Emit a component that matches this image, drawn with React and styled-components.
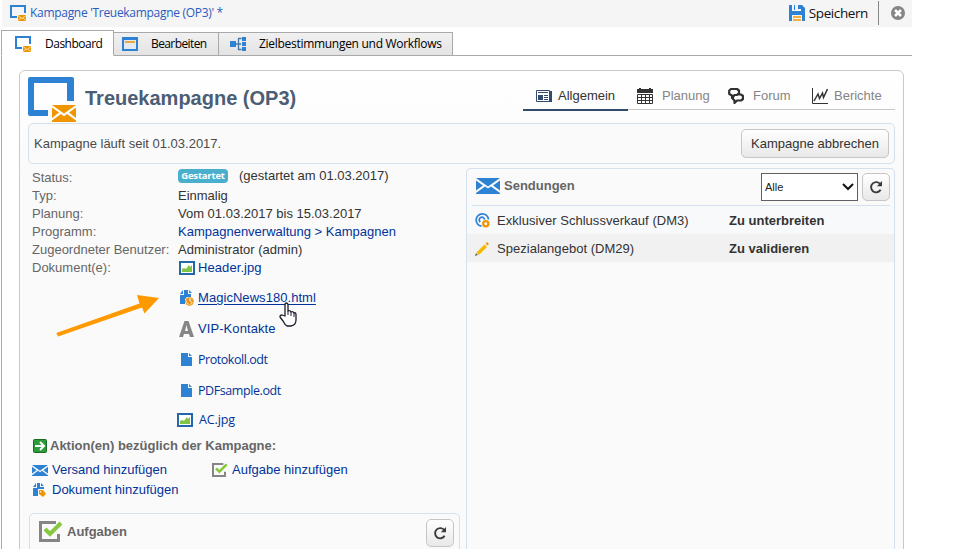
import React from "react";
import styled, { createGlobalStyle } from "styled-components";

const Global = createGlobalStyle`
  * { box-sizing: border-box; }
  body { margin: 0; background: #fff; font-family: "Liberation Sans", Arial, sans-serif; }
`;

const Page = styled.div`
  width: 953px;
  height: 549px;
  overflow: hidden;
  background: #fff;
`;
const Window = styled.div`
  width: 912px;
  height: 549px;
  display: flex;
  flex-direction: column;
`;
const Text = styled.span`
  font-family: ${(p) => (p.$ui ? '"Open Sans", "Noto Sans", sans-serif' : '"Liberation Sans", Arial, sans-serif')};
  font-size: ${(p) => p.$size || 13}px;
  font-weight: ${(p) => (p.$bold ? 700 : 400)};
  letter-spacing: ${(p) => p.$track || 0}px;
  color: ${(p) => p.$color || "#333"};
  line-height: 18px;
  white-space: pre;
`;
const Link = styled(Text).attrs({ as: "a" })`
  color: #003399;
  text-decoration: ${(p) => (p.$hover ? "underline" : "none")};
  text-underline-offset: 2px;
`;
const Icon = styled.svg`
  display: block;
  flex: none;
  width: ${(p) => p.$w || 16}px;
  height: ${(p) => p.$h || p.$w || 16}px;
`;

const TitleBar = styled.header`
  display: flex;
  flex: none;
  align-items: center;
  height: 27px;
  margin-left: 2px;
  padding: 0 7px 1px 8px;
  background: #f5f5f5;
`;
const TitleText = styled.div`
  flex: 1;
  display: flex;
  margin-left: 4px;
`;
const SaveButton = styled.div`
  display: flex;
  align-items: center;
  gap: 4px;
`;
const BarDivider = styled.i`
  width: 1px;
  height: 24px;
  margin: 0 12px 0 10px;
  background: #858585;
`;

const Tabs = styled.nav`
  display: flex;
  flex: none;
  align-items: flex-end;
  height: 26px;
  margin: 3px 0 0 1px;
`;
const Tab = styled.div`
  display: flex;
  align-items: center;
  width: ${(p) => p.$w}px;
  height: ${(p) => (p.$active ? 26 : 24)}px;
  padding-top: ${(p) => (p.$active ? 2 : 0)}px;
  padding-left: ${(p) => p.$pad}px;
  gap: ${(p) => p.$gap}px;
  border: 1px solid #a9a9a9;
  border-left-width: ${(p) => (p.$first === false ? 0 : 1)}px;
  border-bottom-color: ${(p) => (p.$active ? "#fff" : "#a9a9a9")};
  background: ${(p) => (p.$active ? "#fff" : "linear-gradient(#f1f1f1, #e3e3e3)")};
`;
const TabLine = styled.div`
  flex: 1;
  border-bottom: 1px solid #a9a9a9;
`;
const Workspace = styled.main`
  flex: 1;
  min-height: 0;
  margin-left: 1px;
  padding: 14px 8px 0 17px;
  border-left: 1px solid #a9a9a9;
`;
const Panel = styled.section`
  height: 500px;
  padding: 6px 8px 0;
  border: 1px solid #c9c9c9;
  border-radius: 6px;
  background: linear-gradient(#fff, #fafafa 100px);
`;
const PanelHeader = styled.div`
  display: flex;
  height: 46px;
`;
const PanelTitle = styled.h1`
  flex: 1;
  margin: 9px 0 0 9px;
  line-height: 24px;
  font-size: 20px;
`;
const ViewTabs = styled.div`
  display: flex;
  width: 372px;
  height: 28px;
  margin-top: 6px;
`;
const ViewTab = styled.div`
  display: flex;
  align-items: center;
  gap: ${(p) => p.$gap}px;
  width: ${(p) => p.$w}px;
  padding: 0 0 ${(p) => (p.$active ? 0 : 1)}px ${(p) => p.$pad}px;
  border-bottom: ${(p) => (p.$active ? "2px solid #334a6d" : "1px solid #c8c8c8")};
  height: ${(p) => (p.$active ? 28 : 27)}px;
`;
const StatusBar = styled.div`
  display: flex;
  align-items: center;
  justify-content: space-between;
  width: 867px;
  height: 41px;
  padding: 0 5px;
  border: 1px solid #d5e0ee;
  border-radius: 5px;
  background: #fafafa;
`;
const RaisedButton = styled.button`
  display: flex;
  align-items: center;
  justify-content: center;
  flex: none;
  width: ${(p) => p.$w}px;
  height: ${(p) => p.$h}px;
  padding: 0;
  border: 1px solid #c6c6c6;
  border-radius: 5px;
  background: linear-gradient(#fff, #e8e8e8);
`;
const Columns = styled.div`
  display: flex;
  gap: 6px;
  margin-top: 4px;
`;
const LeftColumn = styled.div`
  width: 432px;
`;
const Facts = styled.div`
  padding: 1px 0 0 4px;
`;
const Fact = styled.div`
  display: grid;
  grid-template-columns: 146px 1fr;
  align-items: center;
  height: 18px;
`;
const Inline = styled.div`
  display: flex;
  align-items: center;
  margin-top: ${(p) => p.$lift || 0}px;
  margin-left: ${(p) => p.$indent || 0}px;
  gap: ${(p) => p.$gap || 0}px;
`;
const Badge = styled.span`
  display: flex;
  align-items: center;
  justify-content: center;
  width: 50px;
  height: 14px;
  border-radius: 4px;
  background: #49afcd;
`;
const Documents = styled.div`
  display: flex;
  flex-direction: column;
  margin: -24px 0 0 150px;
`;
const DocumentRow = styled.div`
  display: flex;
  align-items: center;
  height: ${(p) => p.$h}px;
  margin-left: ${(p) => p.$x}px;
  gap: ${(p) => p.$gap}px;
`;
const ActionsTitle = styled.div`
  display: flex;
  align-items: center;
  gap: 3px;
  margin: 3px 0 0 5px;
`;
const Actions = styled.div`
  display: grid;
  grid-template-columns: 180px 1fr;
  grid-auto-rows: 20px;
  align-items: center;
  margin: 5px 0 0 4px;
`;
const TaskBox = styled.div`
  display: flex;
  justify-content: space-between;
  width: 431px;
  height: 60px;
  margin: 13px 0 0 1px;
  padding: 5px 5px 0 9px;
  border: 1px solid #d5e0ee;
  border-radius: 5px;
`;
const Deliveries = styled.section`
  width: 429px;
  height: 400px;
  border: 1px solid #d5e0ee;
  border-radius: 4px;
  background: #fafafa;
`;
const DeliveriesHeader = styled.div`
  display: flex;
  align-items: center;
  height: 37px;
  margin: 0 4px 0 5px;
  padding-left: 4px;
  border-bottom: 1px solid #d5e0ee;
`;
const Select = styled.div`
  display: flex;
  align-items: center;
  justify-content: space-between;
  width: 97px;
  height: 28px;
  margin: 0 4px 0 auto;
  padding: 0 3px;
  border: 1px solid #606060;
  background: #fff;
`;
const Delivery = styled.div`
  display: grid;
  grid-template-columns: 22px 232px 1fr;
  align-items: center;
  height: 28px;
  padding: 1px 0 0 8px;
  background: ${(p) => p.$bg};
`;
const Pointer = styled(Icon)`
  position: absolute;
  left: 279px;
  top: 302px;
`;
const Arrow = styled(Icon)`
  position: absolute;
  left: 54px;
  top: 290px;
`;

const Envelope = ({ w = 24, h = 16, color = "#2d82d3" }) => (
  <Icon $w={w} $h={h} viewBox="0 0 24 16" preserveAspectRatio="none">
    <path fill={color} d="M0 0h24L12 8.500zM0 2.500l7 5L0 12.500zM24 2.500v10l-7-5zM0 16v-1l9-6.500 3 2 3-2 9 6.500v1z" />
  </Icon>
);
const CampaignIcon = () => (
  <Icon $w={48} $h={45} viewBox="0 0 48 45">
    <path fill="#2d82d3" d="M2 0h42q2 0 2 2v22h-7V6H6v27h14v6H2q-2 0-2-2V2q0-2 2-2z" />
    <path fill="#ef9500" d="M24 28h24L36 36.500zM24 30.500l7 5-7 5.500zM48 30.500V41l-7-5.500zM24 45v-1.500l9-6.500 3 2.300 3-2.300 9 6.500V45z" />
  </Icon>
);
const CampaignSmallIcon = () => (
  <Icon viewBox="0 0 16 16">
    <path fill="none" stroke="#2d82d3" strokeWidth="2" d="M7 12H1V1h14v7" />
    <path fill="#ef9500" d="M8 10h8v6H8z" />
    <path fill="none" stroke="#fbe0b0" strokeWidth=".9" d="M8 10.500l4 3 4-3M8 15.500l3-2.500M16 15.500L13 13" />
  </Icon>
);
const FormIcon = () => (
  <Icon $h={14} viewBox="0 0 16 14">
    <path fill="#e4e8ef" stroke="#2d82d3" strokeWidth="2" d="M1 1h14v12H1z" />
    <path stroke="#2d82d3" strokeWidth="2" d="M1 2h14" />
    <path stroke="#eda63b" strokeWidth="2" d="M3 5h10" />
  </Icon>
);
const WorkflowIcon = () => (
  <Icon viewBox="0 0 16 16">
    <path fill="#2d82d3" d="M0 5h6v6H0zM12 1h4v4h-4zM12 6h4v4h-4zM12 11h4v4h-4z" />
    <path fill="none" stroke="#4577a8" strokeWidth="1.300" d="M5 8h6M11.500 2.500H8.500v11h3" />
  </Icon>
);
const SaveIcon = () => (
  <Icon viewBox="0 0 16 16">
    <path fill="#2d82d3" d="M0 0h3v6h9V0h1l3 3v13h-3v-6H3v6H0zM9 0h3v4H9zM5 0h1v5H5z" />
    <path stroke="#ef9500" strokeWidth="1.500" d="M4 12h8M4 15h8" />
  </Icon>
);
const CloseIcon = () => (
  <Icon $w={14} viewBox="0 0 14 14">
    <circle cx="7" cy="7" r="7" fill="#858585" />
    <path stroke="#fff" strokeWidth="2.500" d="M4 4l6 6M10 4l-6 6" />
  </Icon>
);
const NewsIcon = () => (
  <Icon $h={12} viewBox="0 0 16 12">
    <path fill="#334a6d" d="M13 1h3v11H13z" />
    <path fill="#fff" stroke="#334a6d" d="M.5.500h13v11H.5z" />
    <path fill="#334a6d" d="M2 5h5v5H2zM2 2h10v1H2zM8 5h4v1H8zM8 7h4v1H8zM8 9h4v1H8z" />
  </Icon>
);
const CalendarIcon = () => (
  <Icon viewBox="0 0 16 16">
    <path fill="#333" d="M0 1h2V0h2v1h8V0h2v1h2v4H0z" />
    <path fill="#fff" stroke="#333" d="M.5 6.500h15v9H.5zM.5 9.500h15M.5 12.500h15M4.500 6v10M8.500 6v10M12.500 6v10" />
  </Icon>
);
const ForumIcon = () => (
  <Icon viewBox="0 0 16 16">
    <path fill="none" stroke="#303030" strokeWidth="2.200" strokeLinejoin="round" d="M3 1h6l2 1.500V5L9 7H6.500L4 10V7.500L1.200 6V2.500zM10.500 6.500H13l2 1.500v3l-2 1.500H9L6.500 15v-2.500L5 11V9.500" />
  </Icon>
);
const ChartIcon = () => (
  <Icon viewBox="0 0 16 16">
    <path fill="none" stroke="#333" d="M.5 0v15.500H16" />
    <path fill="none" stroke="#333" strokeWidth="1.500" d="M2 13l4-7 1.500 4.500L10.500 5l1 4.500L15.500 1" />
  </Icon>
);
const ReloadIcon = () => (
  <Icon $w={14} viewBox="0 0 14 14">
    <path fill="none" stroke="#3a3a3a" strokeWidth="1.900" d="M11.500 4.500A5.100 5.100 0 1 0 11.600 9.800" />
    <path fill="#3a3a3a" d="M13 1v5.200H7.800z" />
  </Icon>
);
const ImageIcon = () => (
  <Icon $h={14} viewBox="0 0 16 14">
    <path fill="#fff" stroke="#2468ab" strokeWidth="2" d="M1 1h14v12H1z" />
    <path fill="#80c443" d="M3 11V8l2-1 2 1 3-4 1 2 2-2v7z" />
  </Icon>
);
const FileIcon = () => (
  <Icon $w={11} $h={13} viewBox="0 0 11 13">
    <path fill="#2d82d3" d="M0 0h7v4h4v9H0zM8 0l3 3H8z" />
  </Icon>
);
const HtmlIcon = () => (
  <Icon $w={14} $h={16} viewBox="0 0 14 16">
    <path fill="#2d82d3" d="M4 0h4v4h3v3H7L5 9v5H0V5h4zM0 4l3-4v4zM9 0l3 3H9z" />
    <circle cx="9.500" cy="11.500" r="3.900" fill="#f4d097" stroke="#eb9b27" />
    <path fill="#e88e10" d="M6 10l3-2v3l2 1-1 3-2-2zM11 9l2 1v2l-2-1z" />
  </Icon>
);
const LetterIcon = () => (
  <Icon $w={15} $h={16} viewBox="0 0 15 16">
    <path fill="#868686" fillRule="evenodd" d="M5.500 0h4L15 16h-4l-1-3H5l-1 3H0zM7.500 4L6 10h3z" />
  </Icon>
);
const DocAddIcon = () => (
  <Icon $w={13} $h={14} viewBox="0 0 13 14">
    <path fill="#2d82d3" d="M4 0h3v4h4v2H5v7H0V5h4zM0 4l3-4v4zM8 0l3 3H8z" />
    <path fill="#ef9500" d="M6 7h4l3 4-3 3-4-3z" />
    <circle cx="7.700" cy="8.700" r=".7" fill="#fff" />
  </Icon>
);
const GoIcon = () => (
  <Icon $w={14} viewBox="0 0 14 14">
    <rect x=".5" y=".5" width="13" height="13" rx="1" fill="#2c9c3a" stroke="#176b21" />
    <path fill="none" stroke="#fff" strokeWidth="2" d="M2 7h8M7 3l4 4-4 4" />
  </Icon>
);
const CheckIcon = ({ w = 16, h = 14 }) => (
  <Icon $w={w} $h={h} viewBox="0 0 24 21" preserveAspectRatio="none">
    <path fill="none" stroke="#858585" strokeWidth="3" d="M17 1.500H1.500v18h18V13" />
    <path fill="none" stroke="#88c83f" strokeWidth="4" d="M6 8l5 5L22 2" />
  </Icon>
);
const TargetIcon = () => (
  <Icon $w={15} viewBox="0 0 15 15">
    <path fill="none" stroke="#2d82d3" strokeWidth="1.700" d="M13.500 6.500A6.200 6.200 0 1 0 6.500 13.200M5.300 9A2.700 2.700 0 1 1 9.600 6.600" />
    <circle cx="10.800" cy="10.800" r="2.600" fill="#fff" stroke="#ef9500" strokeWidth="2.300" />
  </Icon>
);
const PencilIcon = () => (
  <Icon $w={14} viewBox="0 0 14 14">
    <path fill="#f2b900" d="M1.500 10.500l8-8 2.500 2.500-8 8z" />
    <path fill="#ee9518" d="M10.500 1.500L12 0l2 2-1.500 1.500z" />
    <path fill="#666" d="M1 11l2 2-3 1z" />
  </Icon>
);

const documents = [
  { icon: ImageIcon, name: "Header.jpg", h: 30, x: 1, gap: 3, track: 0.08 },
  { icon: HtmlIcon, name: "MagicNews180.html", h: 30, x: 2, gap: 4, hover: true, track: 0.05 },
  { icon: LetterIcon, name: "VIP-Kontakte", h: 31, x: 1, gap: 4, track: 0.08 },
  { icon: FileIcon, name: "Protokoll.odt", h: 31, x: 3, gap: 6, track: -0.45, ui: true, size: 12.5 },
  { icon: FileIcon, name: "PDFsample.odt", h: 31, x: 3, gap: 6, track: -0.42, ui: true, size: 12.5 },
  { icon: ImageIcon, name: "AC.jpg", h: 28, x: -1, gap: 6, track: -0.1, ui: true, size: 12.5 },
];

const facts = [
  { label: "Typ:", value: <Text>Einmalig</Text> },
  { label: "Planung:", value: <Text>Vom 01.03.2017 bis 15.03.2017</Text> },
  { label: "Programm:", value: <Link>{"Kampagnenverwaltung > Kampagnen"}</Link> },
  { label: "Zugeordneter Benutzer:", value: <Text>Administrator (admin)</Text> },
];

export default function App() {
  return (
    <Page>
      <Global />
      <Window>
        <TitleBar>
          <CampaignSmallIcon />
          <TitleText><Text $ui $size={12} $track={-0.3} $color="#2a5bc0">Kampagne 'Treuekampagne (OP3)' *</Text></TitleText>
          <SaveButton><SaveIcon /><Text $ui $size={13.5} $track={-0.4} $color="#111">Speichern</Text></SaveButton>
          <BarDivider />
          <CloseIcon />
        </TitleBar>
        <Tabs>
          <Tab $active $w={113} $pad={13} $gap={14}><CampaignSmallIcon /><Text $ui $size={12} $track={-0.5} $color="#000">Dashboard</Text></Tab>
          <Tab $w={105} $pad={8} $gap={13} $first={false}><FormIcon /><Text $ui $size={12} $track={-0.6} $color="#000">Bearbeiten</Text></Tab>
          <Tab $w={234} $pad={11} $gap={13} $first={false}><WorkflowIcon /><Text $ui $size={12} $track={-0.29} $color="#000">Zielbestimmungen und Workflows</Text></Tab>
          <TabLine />
        </Tabs>
        <Workspace>
          <Panel>
            <PanelHeader>
              <CampaignIcon />
              <PanelTitle><Text $bold $size={20} $color="#4b5e75">Treuekampagne (OP3)</Text></PanelTitle>
              <ViewTabs>
                <ViewTab $active $w={105} $pad={13} $gap={6}><NewsIcon /><Text>Allgemein</Text></ViewTab>
                <ViewTab $w={91} $pad={9} $gap={9}><CalendarIcon /><Text $color="#858585">Planung</Text></ViewTab>
                <ViewTab $w={84} $pad={9} $gap={9}><ForumIcon /><Text $color="#858585">Forum</Text></ViewTab>
                <ViewTab $w={92} $pad={9} $gap={6}><ChartIcon /><Text $color="#858585">Berichte</Text></ViewTab>
              </ViewTabs>
            </PanelHeader>
            <StatusBar>
              <Text $color="#4a4a4a">Kampagne läuft seit 01.03.2017.</Text>
              <RaisedButton $w={148} $h={29}><Text>Kampagne abbrechen</Text></RaisedButton>
            </StatusBar>
            <Columns>
              <LeftColumn>
                <Facts>
                  <Fact>
                    <Text $color="#666">Status:</Text>
                    <Inline $gap={11} $lift={-4}>
                      <Badge><Text $ui $bold $size={9.5} $track={-0.2} $color="#fff">Gestartet</Text></Badge>
                      <Text>(gestartet am 01.03.2017)</Text>
                    </Inline>
                  </Fact>
                  {facts.map((f) => (
                    <Fact key={f.label}><Text $color="#666">{f.label}</Text>{f.value}</Fact>
                  ))}
                  <Fact><Text $color="#666">Dokument(e):</Text></Fact>
                </Facts>
                <Documents>
                  {documents.map(({ icon: Glyph, ...d }) => (
                    <DocumentRow key={d.name} $h={d.h} $x={d.x} $gap={d.gap}>
                      <Glyph />
                      <Link $ui={d.ui} $size={d.size} $track={d.track} $hover={d.hover}>{d.name}</Link>
                    </DocumentRow>
                  ))}
                </Documents>
                <ActionsTitle>
                  <GoIcon /><Text $bold $color="#666">Aktion(en) bezüglich der Kampagne:</Text>
                </ActionsTitle>
                <Actions>
                  <Inline $gap={4}><Envelope w={16} h={11} /><Link>Versand hinzufügen</Link></Inline>
                  <Inline $gap={4}><CheckIcon /><Link>Aufgabe hinzufügen</Link></Inline>
                  <Inline $gap={6} $indent={1}><DocAddIcon /><Link>Dokument hinzufügen</Link></Inline>
                </Actions>
                <TaskBox>
                  <Inline $gap={4} $lift={-28}><CheckIcon w={24} h={21} /><Text $bold $color="#666">Aufgaben</Text></Inline>
                  <RaisedButton $w={28} $h={28}><ReloadIcon /></RaisedButton>
                </TaskBox>
              </LeftColumn>
              <Deliveries>
                <DeliveriesHeader>
                  <Inline $gap={4} $lift={-2}><Envelope /><Text $bold $color="#666">Sendungen</Text></Inline>
                  <Select>
                    <Text $size={11} $color="#222">Alle</Text>
                    <Icon $w={12} $h={8} viewBox="0 0 12 8"><path fill="none" stroke="#111" strokeWidth="2" d="M1 1l5 5 5-5" /></Icon>
                  </Select>
                  <RaisedButton $w={28} $h={28}><ReloadIcon /></RaisedButton>
                </DeliveriesHeader>
                <Delivery $bg="#f7f9fb"><TargetIcon /><Text $track={0.03}>Exklusiver Schlussverkauf (DM3)</Text><Text $bold>Zu unterbreiten</Text></Delivery>
                <Delivery $bg="#f1f1f1"><PencilIcon /><Text $track={0.03}>Spezialangebot (DM29)</Text><Text $bold>Zu validieren</Text></Delivery>
              </Deliveries>
            </Columns>
          </Panel>
        </Workspace>
      </Window>
      <Arrow $w={108} $h={48} viewBox="0 0 108 48">
        <path fill="#ff9900" d="M2.300 43L85.500 13.500L83 5L105 8L90.500 23.500L88 17.500L4 46.500z" />
      </Arrow>
      <Pointer $w={18} $h={25} viewBox="0 0 18 25">
        <path fill="#fff" stroke="#1c1c2c" strokeWidth="1.300" strokeLinejoin="round" d="M6 14V3q0-2 1.500-2T9 3v6q2-1 3 1 2-1 3 1 2-1 2 2v5q0 5-5 6H8q-2-1-4-5l-3-4q0-2 2-2z" />
        <path stroke="#1c1c2c" d="M9 9v4M12 10v4M15 11v4" />
      </Pointer>
    </Page>
  );
}
